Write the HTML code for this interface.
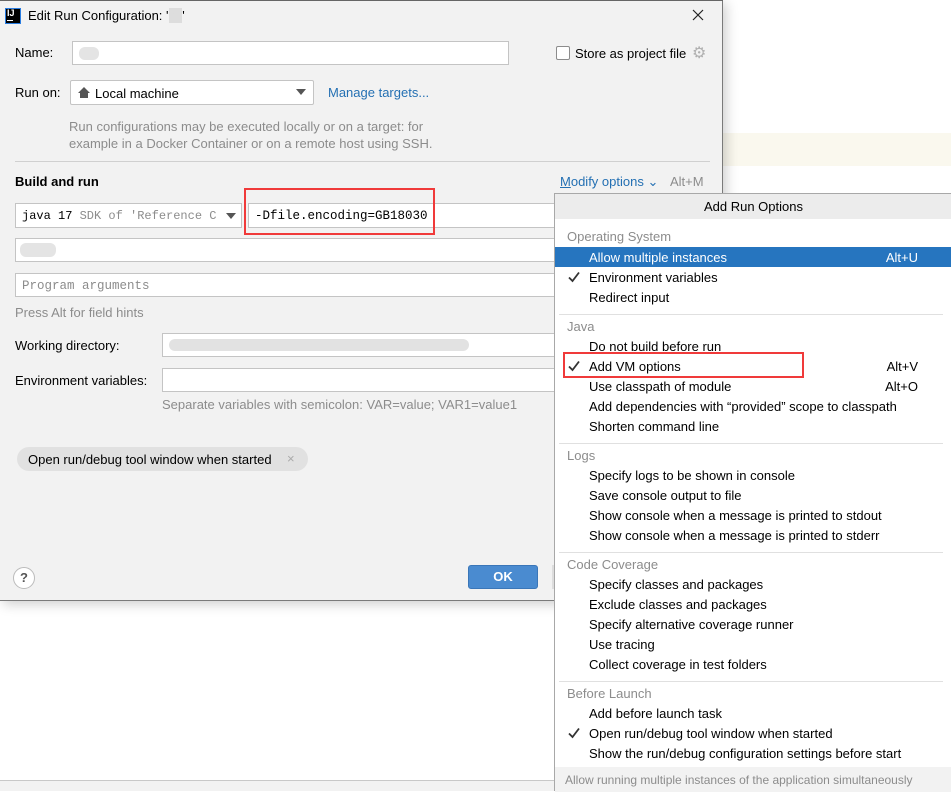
<!DOCTYPE html>
<html><head><meta charset="utf-8"><style>
*{box-sizing:border-box;margin:0;padding:0}
body{width:951px;height:791px;position:relative;overflow:hidden;background:#fff;font-family:"Liberation Sans","Noto Sans CJK SC",sans-serif;font-size:13px;color:#000}
.a{position:absolute;white-space:nowrap}
.f{position:absolute;background:#fff;border:1px solid #c4c4c4;overflow:hidden}
.mono{font-family:"Liberation Mono",monospace;font-size:12.5px}
.g{color:#8c8c8c}
.it{position:absolute;left:34px;white-space:nowrap}
.sec{position:absolute;left:12px;color:#8c8c8c}
.sc{position:absolute;right:33px}
.ck{position:absolute;left:13px;width:12px;height:12px}
.sep{position:absolute;left:4px;right:8px;height:1px;background:#e0e0e0}
</style></head><body>
<div class="a" style="left:722px;top:133px;width:229px;height:33px;background:#faf8ee"></div>
<div class="a" style="left:722px;top:193px;width:229px;height:1px;background:#b5b5b5"></div>
<div class="a" style="left:0;top:780px;width:554px;height:1px;background:#c8c8c8"></div>
<div class="a" style="left:0;top:781px;width:554px;height:10px;background:#f2f2f2"></div>
<div class="a" style="left:0;top:0;width:723px;height:601px;background:#f2f2f2;border-right:1px solid #7a7a7a;border-bottom:1px solid #7a7a7a;box-shadow:3px 3px 12px rgba(0,0,0,.2)">
 <div class="a" style="left:0;top:0;width:723px;height:1px;background:#666"></div>
 <div class="a" style="left:5px;top:8px;width:16px;height:16px;background:#000;border:1px solid #2a7de1"></div>
 <div class="a" style="left:7px;top:8px;color:#fff;font-size:9px;font-weight:bold">IJ</div>
 <div class="a" style="left:7px;top:20px;width:6px;height:1px;background:#fff"></div>
 <div class="a" style="left:28px;top:8px">Edit Run Configuration: '<span style="background:#ddd;color:#ddd">g&nbsp;l</span>'</div>
 <svg class="a" style="left:692px;top:9px" width="12" height="12" viewBox="0 0 12 12"><path d="M1 1L11 11M11 1L1 11" stroke="#222" stroke-width="1.2"/></svg>
 <div class="a" style="left:15px;top:45px">Name:</div>
 <div class="f" style="left:72px;top:41px;width:437px;height:24px"><span class="a" style="left:6px;top:5px;width:20px;height:13px;background:#e4e4e4;border-radius:6px"></span></div>
 <div class="a" style="left:556px;top:46px;width:14px;height:14px;background:#fff;border:1px solid #8c8c8c;border-radius:2px"></div>
 <div class="a" style="left:575px;top:46px">Store as project file</div>
 <div class="a" style="left:692px;top:43px;color:#b0b0b0;font-size:16px">⚙</div>
 <div class="a" style="left:15px;top:85px">Run on:</div>
 <div class="f" style="left:70px;top:80px;width:244px;height:25px;border-radius:2px"><svg class="a" style="left:7px;top:6px" width="12" height="11" viewBox="0 0 12 11"><path d="M6 0L0 6H2V11H10V6H12Z" fill="#555"/></svg><span class="a" style="left:24px;top:5px">Local machine</span><span class="a" style="left:225px;top:8px;border-left:5px solid transparent;border-right:5px solid transparent;border-top:6px solid #555"></span></div>
 <div class="a" style="left:328px;top:85px;color:#2470b3">Manage targets...</div>
 <div class="a g" style="left:69px;top:118px;line-height:17px">Run configurations may be executed locally or on a target: for<br>example in a Docker Container or on a remote host using SSH.</div>
 <div class="a" style="left:15px;top:161px;width:695px;height:1px;background:#d0d0d0"></div>
 <div class="a" style="left:15px;top:174px;font-weight:bold">Build and run</div>
 <div class="a" style="left:560px;top:174px;color:#2470b3"><u>M</u>odify options ⌄</div>
 <div class="a" style="left:670px;top:174px;color:#8c8c8c">Alt+M</div>
 <div class="f" style="left:15px;top:203px;width:227px;height:25px"><span class="a mono" style="left:6px;top:5px;font-size:12px">java 17 <span class="g">SDK of 'Reference Ci</span></span><span class="a" style="left:200px;top:0;width:26px;height:23px;background:#fff"></span><span class="a" style="left:210px;top:9px;border-left:5px solid transparent;border-right:5px solid transparent;border-top:6px solid #555"></span></div>
 <div class="f" style="left:248px;top:203px;width:480px;height:25px"><span class="a mono" style="left:6px;top:5px">-Dfile.encoding=GB18030</span></div>
 <div class="a" style="left:244px;top:188px;width:191px;height:47px;border:2px solid #f03a3a"></div>
 <div class="f" style="left:15px;top:238px;width:720px;height:24px"><span class="a" style="left:4px;top:4px;width:36px;height:14px;background:#e4e4e4;border-radius:6px"></span></div>
 <div class="f" style="left:15px;top:273px;width:720px;height:24px"><span class="a mono g" style="left:6px;top:5px">Program arguments</span></div>
 <div class="a g" style="left:15px;top:305px">Press Alt for field hints</div>
 <div class="a" style="left:15px;top:338px">Working directory:</div>
 <div class="f" style="left:162px;top:333px;width:570px;height:24px"><span class="a" style="left:6px;top:5px;width:300px;height:12px;background:#e2e2e2;border-radius:6px"></span></div>
 <div class="a" style="left:15px;top:373px">Environment variables:</div>
 <div class="f" style="left:162px;top:368px;width:570px;height:24px"></div>
 <div class="a g" style="left:162px;top:397px">Separate variables with semicolon: VAR=value; VAR1=value1</div>
 <div class="a" style="left:17px;top:447px;width:291px;height:24px;background:#e1e1e1;border-radius:12px"><span class="a" style="left:11px;top:5px">Open run/debug tool window when started</span><span class="a" style="left:270px;top:4px;color:#aaa">×</span></div>
 <div class="a" style="left:13px;top:567px;width:22px;height:22px;border:1px solid #bbb;border-radius:50%;background:#fff;text-align:center;line-height:20px;font-weight:bold;color:#555">?</div>
 <div class="a" style="left:468px;top:565px;width:70px;height:24px;background:#4a8bd0;border:1px solid #3a76b8;border-radius:3px;color:#fff;font-weight:bold;text-align:center;line-height:22px">OK</div>
 <div class="a" style="left:552px;top:565px;width:4px;height:24px;background:#ddd"></div>
</div>
<div class="a" style="left:554px;top:193px;width:397px;height:598px;background:#fff;border-left:1px solid #a8a8a8;border-top:1px solid #a8a8a8">
 <div class="a" style="left:0;top:0;width:397px;height:25px;background:#ececec;text-align:center;line-height:25px">Add Run Options</div>
 <div class="sec" style="top:35px">Operating System</div>
 <div class="a" style="left:0;top:53px;width:397px;height:20px;background:#2675bf"></div>
 <div class="it" style="top:56px;color:#fff">Allow multiple instances</div><div class="sc" style="top:56px;color:#fff">Alt+U</div>
 <svg class="ck" style="top:77px" viewBox="0 0 12 12"><path d="M1 6.5L4.5 10L11 1.5" fill="none" stroke="#333" stroke-width="1.8"/></svg><div class="it" style="top:76px">Environment variables</div>
 <div class="it" style="top:96px">Redirect input</div>
 <div class="sep" style="top:120px"></div>
 <div class="sec" style="top:125px">Java</div>
 <div class="it" style="top:145px">Do not build before run</div>
 <svg class="ck" style="top:166px" viewBox="0 0 12 12"><path d="M1 6.5L4.5 10L11 1.5" fill="none" stroke="#333" stroke-width="1.8"/></svg><div class="it" style="top:165px">Add VM options</div><div class="sc" style="top:165px">Alt+V</div>
 <div class="a" style="left:8px;top:158px;width:241px;height:26px;border:2px solid #f03a3a"></div>
 <div class="it" style="top:185px">Use classpath of module</div><div class="sc" style="top:185px">Alt+O</div>
 <div class="it" style="top:205px">Add dependencies with “provided” scope to classpath</div>
 <div class="it" style="top:225px">Shorten command line</div>
 <div class="sep" style="top:249px"></div>
 <div class="sec" style="top:254px">Logs</div>
 <div class="it" style="top:274px">Specify logs to be shown in console</div>
 <div class="it" style="top:294px">Save console output to file</div>
 <div class="it" style="top:314px">Show console when a message is printed to stdout</div>
 <div class="it" style="top:334px">Show console when a message is printed to stderr</div>
 <div class="sep" style="top:358px"></div>
 <div class="sec" style="top:363px">Code Coverage</div>
 <div class="it" style="top:383px">Specify classes and packages</div>
 <div class="it" style="top:403px">Exclude classes and packages</div>
 <div class="it" style="top:423px">Specify alternative coverage runner</div>
 <div class="it" style="top:443px">Use tracing</div>
 <div class="it" style="top:463px">Collect coverage in test folders</div>
 <div class="sep" style="top:487px"></div>
 <div class="sec" style="top:492px">Before Launch</div>
 <div class="it" style="top:512px">Add before launch task</div>
 <svg class="ck" style="top:533px" viewBox="0 0 12 12"><path d="M1 6.5L4.5 10L11 1.5" fill="none" stroke="#333" stroke-width="1.8"/></svg><div class="it" style="top:532px">Open run/debug tool window when started</div>
 <div class="it" style="top:552px">Show the run/debug configuration settings before start</div>
 <div class="a" style="left:0;top:573px;width:397px;height:25px;background:#f2f2f2"><span class="a" style="left:10px;top:6px;font-size:12px;color:#8c8c8c">Allow running multiple instances of the application simultaneously</span></div>
</div>
</body></html>
